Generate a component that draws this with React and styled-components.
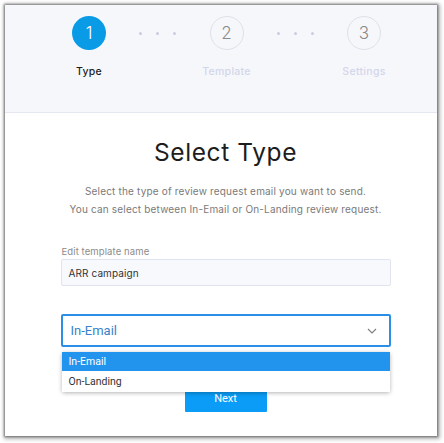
import React from "react"
import styled, { createGlobalStyle } from "styled-components"

const GlobalStyle = createGlobalStyle`
  html, body {
    margin: 0;
    padding: 0;
    background: #ffffff;
    font-family: Inter, "Noto Sans", Arial, sans-serif;
  }
`

const Page = styled.div`
  width: 444px;
  height: 443px;
  padding: 5px 7px 7px 5px;
  box-sizing: border-box;
`

const Panel = styled.div`
  height: 100%;
  background: #fff;
  box-shadow: 0 0 2px 1px rgba(0, 0, 0, 0.4), 1px 1px 4px 2px rgba(0, 0, 0, 0.3);
  display: flex;
  flex-direction: column;
  position: relative;
`

const Header = styled.div`
  height: 108px;
  box-sizing: border-box;
  background: #f6f7fb;
  border-bottom: 1px solid #e4e7f0;
  padding: 11px 0 0 44px;
  display: flex;
  align-items: flex-start;
`

const Step = styled.div`
  width: 80px;
  display: flex;
  flex-direction: column;
  align-items: center;
  gap: 16px;
`

const Circle = styled.div`
  width: 34px;
  height: 34px;
  box-sizing: border-box;
  border-radius: 50%;
  display: flex;
  align-items: center;
  justify-content: center;
  font-size: 17px;
  font-weight: 300;
  background: ${p => (p.$active ? "#0a9be6" : "transparent")};
  border: ${p => (p.$active ? "none" : "1px solid #dfe1e9")};
  color: ${p => (p.$active ? "#fff" : "#8a8a8a")};
`

const StepLabel = styled.div`
  font-size: 10.5px;
  font-weight: 500;
  line-height: 12px;
  letter-spacing: 0.3px;
  color: ${p => (p.$active ? "#1e1e1e" : "#d3d6ea")};
`

const Connector = styled.div`
  width: 57.5px;
  height: 34px;
  display: flex;
  align-items: center;
  justify-content: center;
  gap: 14px;
`

const Dot = styled.span`
  width: 3px;
  height: 3px;
  border-radius: 50%;
  background: #c9cde0;
`

const Body = styled.div`
  flex: 1;
  padding: 24px 0 0 9px;
  display: flex;
  flex-direction: column;
  align-items: center;
`

const Title = styled.h1`
  margin: 0;
  font-size: 24.5px;
  line-height: 30px;
  font-weight: 400;
  letter-spacing: 0.6px;
  color: #1d1d1d;
`

const Description = styled.p`
  margin: 16px 0 0;
  font-size: 10px;
  line-height: 17.5px;
  letter-spacing: 0.18px;
  color: #7a7a7a;
  text-align: center;
`

const Form = styled.div`
  width: 330px;
  margin-top: 27px;
  display: flex;
  flex-direction: column;
`

const FieldLabel = styled.label`
  font-size: 9.5px;
  line-height: 14px;
  letter-spacing: 0.1px;
  color: #8c8c8c;
  padding-left: 1px;
`

const TextInput = styled.div`
  height: 27px;
  box-sizing: border-box;
  background: #f8f9fd;
  border: 1px solid #e1e4ee;
  border-radius: 2px;
  padding: 0 7px;
  display: flex;
  align-items: center;
  font-size: 10px;
  letter-spacing: 0.1px;
  color: #333;
`

const SelectWrap = styled.div`
  position: relative;
  margin-top: 28px;
`

const SelectBox = styled.div`
  height: 33px;
  box-sizing: border-box;
  border: 2px solid #2b8fe8;
  border-radius: 2px;
  padding: 0 12px 0 8px;
  display: flex;
  align-items: center;
  justify-content: space-between;
  font-family: Roboto, "Liberation Sans", sans-serif;
  font-size: 13px;
  color: #3a82c9;
`

const Menu = styled.ul`
  position: absolute;
  top: 38px;
  left: 1px;
  right: 1px;
  margin: 0;
  padding: 0;
  list-style: none;
  background: #fff;
  border-radius: 2px;
  box-shadow: 0 1px 4px rgba(0, 0, 0, 0.3);
  z-index: 5;
`

const Option = styled.li`
  height: ${p => (p.$selected ? "19px" : "21px")};
  display: flex;
  align-items: center;
  padding: 0 7px;
  font-family: Roboto, "Liberation Sans", sans-serif;
  font-size: 10.5px;
  background: ${p => (p.$selected ? "#2394ee" : "#fff")};
  color: ${p => (p.$selected ? "#fff" : "#333")};
`

const NextButton = styled.button`
  align-self: center;
  margin-top: 37px;
  width: 82px;
  height: 28px;
  border: none;
  border-radius: 1px;
  background: #0a9cf6;
  color: #fff;
  font-family: Roboto, "Liberation Sans", sans-serif;
  font-size: 11px;
  padding-top: 2px;
`

const steps = [
  { n: 1, label: "Type", active: true },
  { n: 2, label: "Template" },
  { n: 3, label: "Settings" },
]

function Chevron() {
  return (
    <svg width="10" height="6" viewBox="0 0 10 6">
      <polyline points="1,1 5,5 9,1" fill="none" stroke="#7d7d7d" strokeWidth="1.1" />
    </svg>
  )
}

export default function App() {
  return (
    <>
      <GlobalStyle />
      <Page>
        <Panel>
          <Header>
            {steps.map((s, i) => (
              <React.Fragment key={s.n}>
                {i > 0 && (
                  <Connector>
                    <Dot />
                    <Dot />
                    <Dot />
                  </Connector>
                )}
                <Step>
                  <Circle $active={s.active}>{s.n}</Circle>
                  <StepLabel $active={s.active}>{s.label}</StepLabel>
                </Step>
              </React.Fragment>
            ))}
          </Header>
          <Body>
            <Title>Select Type</Title>
            <Description>
              Select the type of review request email you want to send.
              <br />
              You can select between In-Email or On-Landing review request.
            </Description>
            <Form>
              <FieldLabel>Edit template name</FieldLabel>
              <TextInput>ARR campaign</TextInput>
              <SelectWrap>
                <SelectBox>
                  <span>In-Email</span>
                  <Chevron />
                </SelectBox>
                <Menu>
                  <Option $selected>In-Email</Option>
                  <Option>On-Landing</Option>
                </Menu>
              </SelectWrap>
              <NextButton>Next</NextButton>
            </Form>
          </Body>
        </Panel>
      </Page>
    </>
  )
}
